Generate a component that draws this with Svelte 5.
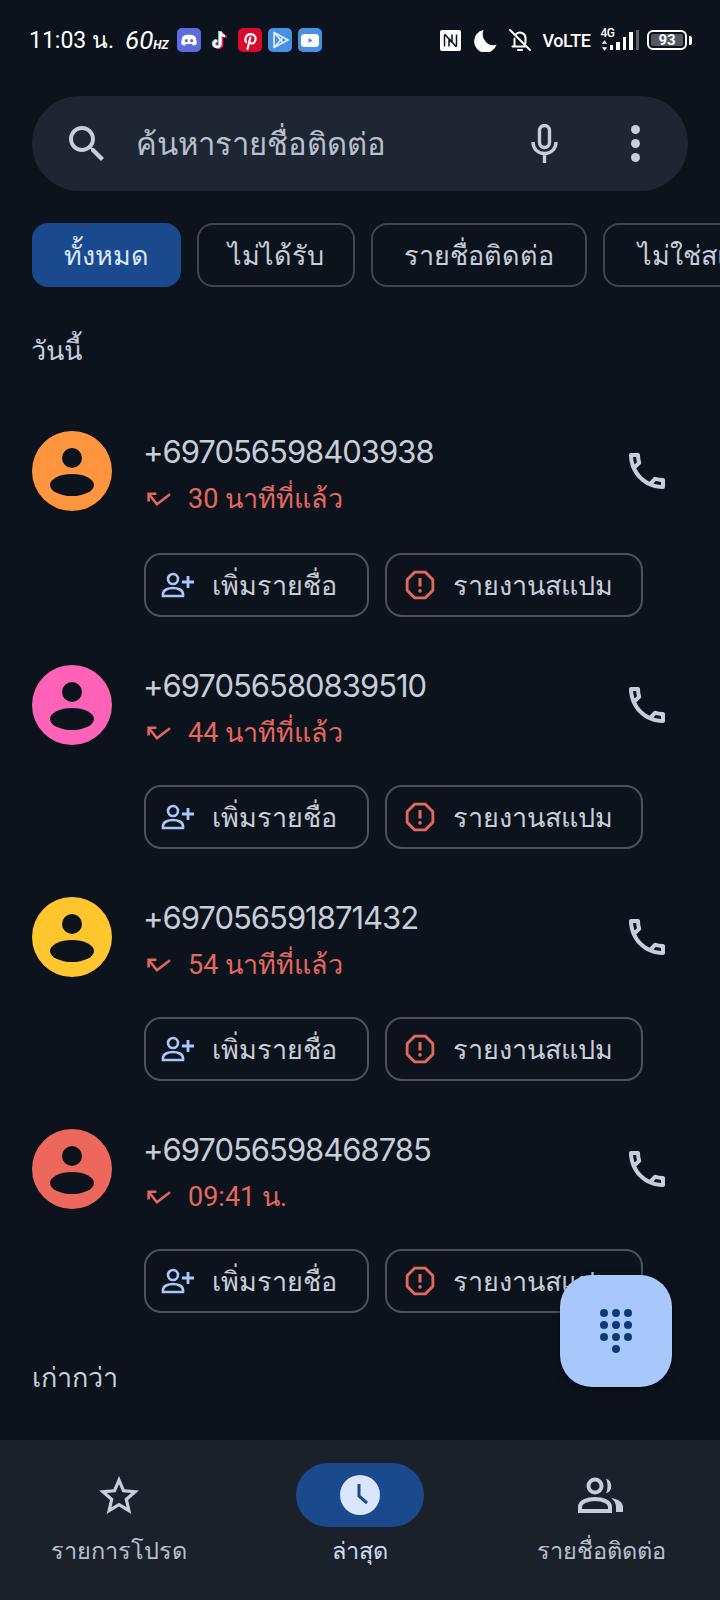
<script>
  const chips = [
    { label: 'ทั้งหมด', width: 149 },
    { label: 'ไม่ได้รับ', width: 158 },
    { label: 'รายชื่อติดต่อ', width: 216 },
    { label: 'ไม่ใช่สแปม', width: 200 }
  ];
  const calls = [
    { number: '+697056598403938', when: '30 นาทีที่แล้ว', color: '#ff963f' },
    { number: '+697056580839510', when: '44 นาทีที่แล้ว', color: '#ff63b8' },
    { number: '+697056591871432', when: '54 นาทีที่แล้ว', color: '#ffc62e' },
    { number: '+697056598468785', when: '09:41 น.', color: '#ee675c' }
  ];
</script>

<div class="screen">
  <header class="status">
    <span class="time">11:03 น.</span>
    <span class="hz">60<small>HZ</small></span>
    <div class="apps">
      <svg class="app" viewBox="0 0 24 24"><rect width="24" height="24" rx="5" fill="#5f6ae0"/><path d="M6 8.200c3.600-1.800 8.400-1.800 12 0 1.300 2.300 1.900 5 1.700 7.700-1.300 1-2.700 1.500-3.700 1.700l-1-1.600h-6l-1 1.600c-1-.2-2.400-.7-3.700-1.700C4.100 13.200 4.700 10.500 6 8.200z" fill="#fff"/><circle cx="9.300" cy="12.700" r="1.600" fill="#5f6ae0"/><circle cx="14.700" cy="12.700" r="1.600" fill="#5f6ae0"/></svg>
      <svg class="tiktok" viewBox="0 0 18 24"><path d="M10 3.500v12.500a3.200 3.200 0 1 1-3.200-3.200M10 3.500c.3 2.700 2 4.300 4.600 4.500" fill="none" stroke="#ee1d52" stroke-width="2.600" transform="translate(1 .6)"/><path d="M9 3.500v12.500a3.200 3.200 0 1 1-3.200-3.200" fill="none" stroke="#69e0e6" stroke-width="2.600" transform="translate(-.6 -.4)"/><path d="M9.500 3.500v12.500a3.200 3.200 0 1 1-3.200-3.200M9.500 3.500c.3 2.700 2 4.300 4.600 4.500" fill="none" stroke="#fff" stroke-width="2.400"/></svg>
      <svg class="app" viewBox="0 0 24 24"><rect width="24" height="24" rx="5" fill="#d80b2c"/><path d="M8 14c-1.800-3.400.6-7.800 4.600-7.800 3.300 0 5.300 2.300 5 5-.3 2.700-2.100 4.500-4.100 4.300-1.200-.1-2-.9-2.200-1.700M12.300 9.500 9.500 21" fill="none" stroke="#fff" stroke-width="2.200" stroke-linecap="round"/></svg>
      <svg class="app" viewBox="0 0 24 24"><rect width="24" height="24" rx="5" fill="#4a90e2"/><path d="M6 4.500v15l14-7.500zM6 4.500l8.500 9.500M6 19.500l8.500-9.500" fill="none" stroke="#dcebff" stroke-width="1.700" stroke-linejoin="round"/></svg>
      <svg class="app" viewBox="0 0 24 24"><rect width="24" height="24" rx="5" fill="#4a90e2"/><rect x="3" y="6" width="18" height="13" rx="3.500" fill="#fff"/><path d="M10.500 10v5l4.200-2.500z" fill="#4a90e2"/></svg>
    </div>
    <div class="sys">
      <svg class="nfc" viewBox="0 0 21 21"><rect width="21" height="21" rx="2" fill="#fff"/><path d="M5.500 4.500c-1 0-1 .5-1 1v11M5 4.500l7 8M15.500 16.500c1 0 1-.5 1-1v-11M16 16.500l-7-8M9 8.500v8M12 12.500v-8" fill="none" stroke="#0d131d" stroke-width="1.500"/></svg>
      <svg class="moon" viewBox="0 0 24 24"><path d="M10 1a11.500 11.500 0 0 0 13.500 15.500A12 12 0 1 1 10 1z" fill="#fff"/></svg>
      <svg class="bell" viewBox="0 0 24 24"><path d="M4.500 18.500h13M6.500 18.500v-8M17.500 15v-5a5.500 5.500 0 0 0-9.500-3.700M10 22h4M2 2l20 20" fill="none" stroke="#fff" stroke-width="2" stroke-linecap="round"/></svg>
      <span class="volte">VoLTE</span>
      <div class="net">
        <span class="g4">4G</span>
        <svg class="arrows" viewBox="0 0 8 12"><path d="M4 0l3 4H1zM4 12l3-4H1z" fill="#fff"/></svg>
      </div>
      <div class="bars"><i class="b1"></i><i class="b2"></i><i class="b3"></i><i class="b4"></i><i class="b5"></i></div>
      <div class="battery"><span class="level">93</span></div>
      <span class="cap"></span>
    </div>
  </header>

  <div class="search">
    <svg class="s-icon" viewBox="3 3 18 18"><path d="M15.500 14h-.79l-.28-.27C15.410 12.590 16 11.110 16 9.500 16 5.910 13.090 3 9.500 3S3 5.910 3 9.500 5.910 16 9.500 16c1.610 0 3.090-.59 4.230-1.570l.27.28v.79l5 4.990L20.490 19l-4.990-5zm-6 0C7.010 14 5 11.990 5 9.500S7.010 5 9.500 5 14 7.010 14 9.500 11.990 14 9.500 14z" fill="#c7cdd9"/></svg>
    <span class="placeholder">ค้นหารายชื่อติดต่อ</span>
    <svg class="mic" viewBox="0 0 27 39"><rect x="8.500" y="1.500" width="10" height="22" rx="5" fill="none" stroke="#c7cdd9" stroke-width="3.400"/><path d="M2 18c0 7 5 11.500 11.500 11.500S25 25 25 18M13.500 29v10" fill="none" stroke="#c7cdd9" stroke-width="3.400"/></svg>
    <div class="dots"><i></i><i></i><i></i></div>
  </div>

  <div class="chips">
    {#each chips as chip, i}
      <div class="chip" class:on={i === 0} style="width:{chip.width}px">{chip.label}</div>
    {/each}
  </div>

  <h2 class="today">วันนี้</h2>

  <main class="calls">
    {#each calls as call}
      <section class="call">
        <div class="top">
          <div class="avatar" style="background:{call.color}">
            <svg viewBox="0 0 80 80"><ellipse cx="40" cy="27" rx="10" ry="10" fill="#0d131d"/><ellipse cx="40" cy="54" rx="22" ry="11" fill="#0d131d"/></svg>
          </div>
          <div class="info">
            <div class="number">{call.number}</div>
            <div class="when">
              <svg class="missed" viewBox="0 0 24 14"><path d="M10 1.500H2.500V9M2.500 1.500l8 10L23 2" fill="none" stroke="#e5685e" stroke-width="2.400"/></svg>
              <span>{call.when}</span>
            </div>
          </div>
          <svg class="phone" viewBox="0 0 24 24"><path d="M6.540 5c.06.89.21 1.760.45 2.590l-1.200 1.200c-.41-1.200-.67-2.470-.76-3.790h1.510m9.860 12.020c.85.24 1.720.39 2.600.45v1.490c-1.320-.09-2.590-.35-3.800-.75l1.200-1.190M7.500 3H4c-.55 0-1 .45-1 1 0 9.390 7.610 17 17 17 .55 0 1-.45 1-1v-3.490c0-.55-.45-1-1-1-1.240 0-2.450-.2-3.570-.57-.1-.04-.21-.05-.31-.05-.26 0-.51.1-.71.29l-2.200 2.200c-2.830-1.450-5.150-3.760-6.590-6.590l2.200-2.200c.28-.28.36-.67.25-1.020C8.700 6.450 8.500 5.250 8.500 4c0-.55-.45-1-1-1z" fill="#c7cdd9"/></svg>
        </div>
        <div class="actions">
          <div class="btn add">
            <svg viewBox="0 0 34 26"><circle cx="12" cy="7" r="5" fill="none" stroke="#a8c8fb" stroke-width="2.600"/><path d="M2 24v-2c0-4 5-6 10-6s10 2 10 6v2z" fill="none" stroke="#a8c8fb" stroke-width="2.600"/><path d="M27 4v12M21 10h12" stroke="#a8c8fb" stroke-width="2.800"/></svg>
            <span>เพิ่มรายชื่อ</span>
          </div>
          <div class="btn spam">
            <svg viewBox="0 0 28 28"><path d="M9 2h10l7 7v10l-7 7H9l-7-7V9z" fill="none" stroke="#e5685e" stroke-width="2.600"/><path d="M14 7.500v8" stroke="#e5685e" stroke-width="2.800"/><circle cx="14" cy="19.500" r="1.700" fill="#e5685e"/></svg>
            <span>รายงานสแปม</span>
          </div>
        </div>
      </section>
    {/each}
  </main>

  <h2 class="older">เก่ากว่า</h2>

  <div class="fab">
    <svg viewBox="0 0 36 48"><g fill="#0b3a78"><circle cx="6" cy="6" r="4"/><circle cx="18" cy="6" r="4"/><circle cx="30" cy="6" r="4"/><circle cx="6" cy="18" r="4"/><circle cx="18" cy="18" r="4"/><circle cx="30" cy="18" r="4"/><circle cx="6" cy="30" r="4"/><circle cx="18" cy="30" r="4"/><circle cx="30" cy="30" r="4"/><circle cx="18" cy="42" r="4"/></g></svg>
  </div>

  <nav class="nav">
    <div class="tab">
      <div class="pill">
        <svg class="star" viewBox="2 2 20 19"><path d="M22 9.240l-7.190-.62L12 2 9.190 8.630 2 9.240l5.460 4.730L5.820 21 12 17.270 18.180 21l-1.630-7.030L22 9.240zM12 15.400l-3.760 2.270 1-4.280-3.320-2.880 4.380-.38L12 6.100l1.710 4.040 4.380.38-3.320 2.880 1 4.280L12 15.400z" fill="#c7cdd9"/></svg>
      </div>
      <span>รายการโปรด</span>
    </div>
    <div class="tab active">
      <div class="pill">
        <svg class="clock" viewBox="0 0 40 40"><circle cx="20" cy="20" r="20" fill="#d9e6fb"/><path d="M19 9v12l8 7" fill="none" stroke="#1a4a8d" stroke-width="3"/></svg>
      </div>
      <span>ล่าสุด</span>
    </div>
    <div class="tab">
      <div class="pill">
        <svg class="people" viewBox="0 0 46 36"><circle cx="17" cy="9" r="6.500" fill="none" stroke="#c7cdd9" stroke-width="4"/><path d="M2 34v-4c0-5 7-8 15-8s15 3 15 8v4z" fill="none" stroke="#c7cdd9" stroke-width="4"/><path d="M28 1.500a8 8 0 0 1 0 15c2-4 2-11 0-15zM33 21c7 1 12 4 12 9v5h-7v-5c0-4-2-7-5-9z" fill="#c7cdd9"/></svg>
      </div>
      <span>รายชื่อติดต่อ</span>
    </div>
  </nav>
</div>

<style>
  :global(body) {
    margin: 0;
    background: #0d131d;
  }

  .screen {
    position: relative;
    width: 720px;
    height: 1600px;
    overflow: hidden;
    display: flex;
    flex-direction: column;
    background: #0d131d;
    color: #c7cdd9;
    font-family: Roboto, "Noto Sans", "DejaVu Sans", sans-serif;
  }

  /* status bar */
  .status {
    height: 80px;
    display: flex;
    align-items: center;
    padding: 0 28px 0 29px;
    box-sizing: border-box;
    color: #fff;
  }
  .time {
    font-size: 23px;
    width: 96px;
    white-space: nowrap;
  }
  .hz {
    font-size: 26px;
    font-style: italic;
    width: 52px;
    white-space: nowrap;
  }
  .hz small {
    font-size: 12px;
    font-weight: 700;
  }
  .apps {
    display: flex;
    align-items: center;
    gap: 6px;
  }
  .app {
    width: 24px;
    height: 24px;
  }
  .tiktok {
    width: 18px;
    height: 24px;
    margin: 0 3px 0 4px;
  }
  .sys {
    margin-left: auto;
    display: flex;
    align-items: center;
  }
  .nfc {
    width: 21px;
    height: 21px;
    margin-right: 13px;
  }
  .moon {
    width: 23px;
    height: 23px;
    margin-right: 11px;
  }
  .bell {
    width: 24px;
    height: 24px;
    margin-right: 10px;
  }
  .volte {
    font-size: 18px;
    font-weight: 500;
    letter-spacing: -0.4px;
    margin-right: 10px;
  }
  .net {
    width: 17px;
    display: flex;
    flex-direction: column;
    align-items: flex-start;
    line-height: 1;
    margin-bottom: 2px;
  }
  .g4 {
    font-size: 12px;
    font-weight: 500;
    letter-spacing: -0.5px;
  }
  .arrows {
    width: 7px;
    height: 11px;
    margin-top: 1px;
  }
  .bars {
    display: flex;
    align-items: flex-end;
    gap: 3px;
    height: 20px;
    margin-left: -8px;
    margin-right: 8px;
  }
  .bars i {
    display: block;
    width: 3.500px;
    background: #fff;
  }
  .b1 { height: 5px; }
  .b2 { height: 8px; }
  .b3 { height: 13px; }
  .b4 { height: 18px; }
  .bars .b5 {
    height: 20px;
    background: #5b5f66;
  }
  .battery {
    width: 40px;
    height: 20px;
    border: 2px solid #fff;
    border-radius: 6px;
    box-sizing: border-box;
    padding: 2px;
    display: flex;
  }
  .level {
    flex: 1;
    background: #55595f;
    border-radius: 2px;
    font-size: 15px;
    font-weight: 700;
    line-height: 12px;
    text-align: center;
  }
  .cap {
    width: 3px;
    height: 9px;
    margin-left: 2px;
    background: #fff;
    border-radius: 0 2px 2px 0;
  }

  /* search */
  .search {
    height: 95px;
    margin: 16px 32px 0;
    flex-shrink: 0;
    border-radius: 48px;
    background: #1e2633;
    display: flex;
    align-items: center;
    padding: 0 48px 0 37px;
  }
  .s-icon {
    width: 36px;
    height: 36px;
    margin-right: 31px;
  }
  .placeholder {
    flex: 1;
    font-size: 31px;
    color: #b9c0cd;
    white-space: nowrap;
  }
  .mic {
    width: 27px;
    height: 39px;
    margin-right: 73px;
  }
  .dots {
    display: flex;
    flex-direction: column;
    gap: 5px;
  }
  .dots i {
    width: 9px;
    height: 9px;
    border-radius: 50%;
    background: #c7cdd9;
  }

  /* filter chips */
  .chips {
    display: flex;
    gap: 16px;
    margin: 32px 0 0 32px;
    flex-shrink: 0;
  }
  .chip {
    height: 64px;
    box-sizing: border-box;
    border: 2px solid #40454e;
    border-radius: 16px;
    display: flex;
    align-items: center;
    justify-content: center;
    font-size: 27px;
    color: #c7cdd9;
    white-space: nowrap;
    flex-shrink: 0;
  }
  .chip.on {
    background: #1a4a8d;
    border-color: #1a4a8d;
    color: #d9e6fb;
  }

  .today,
  .older {
    margin: 0;
    font-size: 27px;
    font-weight: 400;
    line-height: 40px;
  }
  .today {
    margin: 44px 0 0 31px;
  }
  .older {
    position: absolute;
    left: 32px;
    top: 1358px;
  }

  /* call rows */
  .calls {
    margin-top: 60px;
    padding-left: 32px;
    display: flex;
    flex-direction: column;
    gap: 46px;
  }
  .call {
    display: flex;
    flex-direction: column;
    gap: 22px;
  }
  .top {
    display: flex;
    align-items: flex-start;
    height: 100px;
  }
  .call:not(:first-child) .top {
    height: 98px;
    margin-top: 2px;
  }
  .avatar {
    width: 80px;
    height: 80px;
    border-radius: 50%;
    flex-shrink: 0;
    overflow: hidden;
  }
  .avatar svg {
    display: block;
  }
  .info {
    margin-left: 31px;
    width: 480px;
    margin-top: -1px;
  }
  .number {
    font-family: Inter, Roboto, sans-serif;
    font-size: 31px;
    letter-spacing: -1px;
    line-height: 44px;
    color: #c7cdd9;
  }
  .when {
    display: flex;
    align-items: center;
    color: #e5685e;
    font-size: 27px;
    line-height: 40px;
    margin-top: 5px;
    padding-left: 3px;
  }
  .missed {
    width: 25px;
    height: 15px;
    margin-right: 17px;
  }
  .phone {
    width: 48px;
    height: 48px;
    margin-top: 16px;
  }
  .actions {
    display: flex;
    gap: 16px;
    margin-left: 112px;
  }
  .btn {
    height: 64px;
    box-sizing: border-box;
    border: 2px solid #4d525b;
    border-radius: 17px;
    display: flex;
    align-items: center;
    font-size: 27px;
    color: #c7cdd9;
    white-space: nowrap;
  }
  .btn.add {
    width: 225px;
    padding-left: 15px;
  }
  .btn.add svg {
    width: 34px;
    height: 26px;
    margin-right: 17px;
  }
  .btn.spam {
    width: 258px;
    padding-left: 18px;
  }
  .btn.spam svg {
    width: 30px;
    height: 30px;
    margin-right: 18px;
  }

  /* dialpad button */
  .fab {
    position: absolute;
    left: 560px;
    top: 1275px;
    width: 112px;
    height: 112px;
    border-radius: 32px;
    background: #a8c8fb;
    display: flex;
    align-items: center;
    justify-content: center;
    box-shadow: 0 3px 8px rgba(0, 0, 0, 0.4);
  }
  .fab svg {
    width: 36px;
    height: 48px;
  }

  /* bottom nav */
  .nav {
    position: absolute;
    left: 0;
    right: 0;
    bottom: 0;
    height: 160px;
    background: #1a212b;
    display: grid;
    grid-template-columns: 238px 244px 238px;
    box-shadow: 0 -10px 14px rgba(13, 19, 29, 0.6);
  }
  .tab {
    display: flex;
    flex-direction: column;
    align-items: center;
    padding-top: 23px;
    font-size: 23.500px;
    color: #b9c0cd;
    white-space: nowrap;
  }
  .tab.active {
    color: #cfdcf2;
  }
  .pill {
    width: 128px;
    height: 64px;
    border-radius: 32px;
    display: flex;
    align-items: center;
    justify-content: center;
    margin-bottom: 5px;
  }
  .active .pill {
    background: #1a4a8d;
  }
  .star {
    width: 40px;
    height: 38px;
  }
  .clock {
    width: 40px;
    height: 40px;
  }
  .people {
    width: 46px;
    height: 36px;
  }
</style>
